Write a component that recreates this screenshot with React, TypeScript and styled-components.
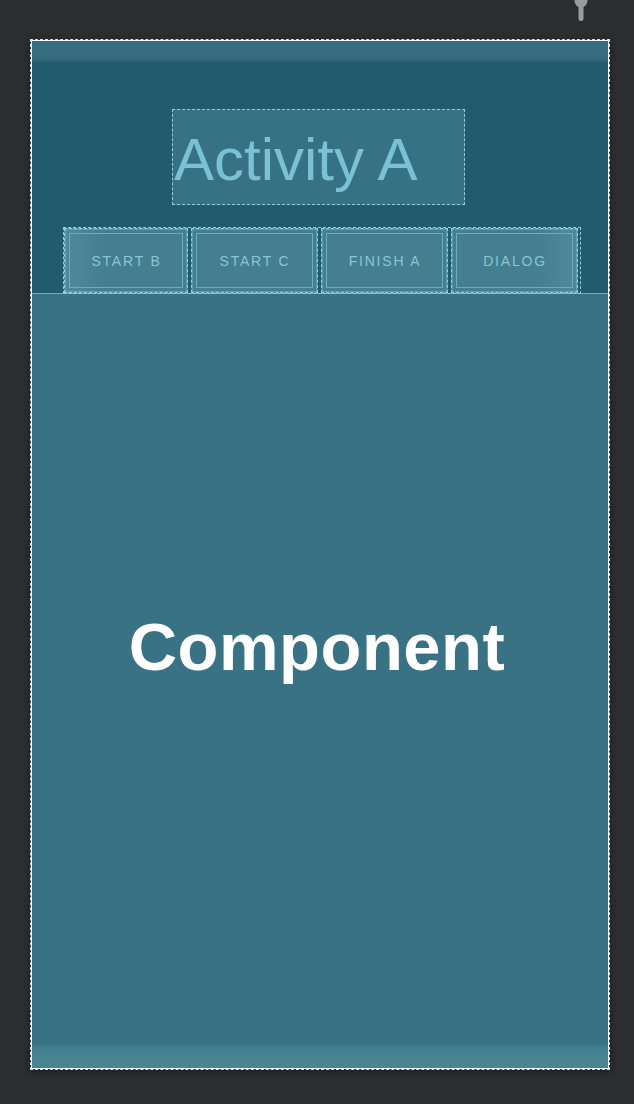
import React from "react";
import styled, { createGlobalStyle } from "styled-components";

const Global = createGlobalStyle`
  html, body { margin: 0; padding: 0; background: #2c2d2f; }
  body { width: 634px; height: 1104px; overflow: hidden; font-family: "Liberation Sans", Arial, sans-serif; }
`;

const Page = styled.div`
  position: relative;
  width: 634px;
  height: 1104px;
  padding: 39px 0 0 30px;
  box-sizing: border-box;
`;

const Pin = styled.svg`
  position: absolute;
  top: 0;
  left: 570px;
`;

const Device = styled.div`
  width: 580px;
  height: 1031px;
  box-sizing: border-box;
  border: 1px dashed #d5e2e6;
  box-shadow: inset 0 0 0 1px #f2fbfc, 0 2px 6px rgba(0,0,0,0.35);
  display: flex;
  flex-direction: column;
  overflow: hidden;
  padding: 1px;
`;

const Header = styled.div`
  flex: none;
  background: #225b6d;
  display: flex;
  flex-direction: column;
  align-items: center;
  border-bottom: 1px solid #66b1c3;
  height: 253px;
  box-sizing: border-box;
`;

const StatusBar = styled.div`
  flex: none;
  align-self: stretch;
  height: 21px;
  background: linear-gradient(#367080, #346c7c 85%, #2a6274);
`;

const TitleBox = styled.div`
  flex: none;
  margin: 47px 3px 0 0;
  width: 293px;
  height: 96px;
  box-sizing: border-box;
  border: 1px dashed #86d0e2;
  background: #377184;
  color: #79c1d3;
  font-family: "Liberation Sans", Arial, sans-serif;
  font-size: 60px;
  font-weight: 400;
  line-height: 100px;
  padding-left: 1px;
  white-space: nowrap;
`;

const ButtonRow = styled.div`
  flex: none;
  margin: 22px 0 0 3px;
  width: 518px;
  height: 67px;
  box-sizing: border-box;
  border: 1px dashed #86d0e2;
  display: flex;
  gap: 3px;
`;

const Btn = styled.div<{ $w: number; $edge?: "left" | "right" }>`
  width: ${(p) => p.$w}px;
  flex: none;
  box-sizing: border-box;
  border: 1px dashed #8ad4e6;
  box-shadow: inset 0 0 0 1px rgba(138, 212, 230, 0.35);
  background: ${(p) =>
    p.$edge === "left"
      ? "linear-gradient(90deg, #4e8898, #4e8898 8%, #447e8f 30%)"
      : p.$edge === "right"
      ? "linear-gradient(270deg, #4e8898, #4e8898 8%, #447e8f 30%)"
      : "#447e8f"};
  padding: 4px;
  display: flex;
`;

const BtnInner = styled.div`
  flex: 1;
  border: 1px solid #6aadbf;
  display: flex;
  align-items: center;
  justify-content: center;
  padding-left: 2px;
  color: #86c7d7;
  font-family: "Liberation Sans", Arial, sans-serif;
  font-size: 14px;
  font-weight: 400;
  letter-spacing: 1.8px;
`;

const Content = styled.div`
  flex: 1;
  background: #387284;
  display: flex;
  align-items: center;
  justify-content: center;
  padding-bottom: 46px;
`;

const Label = styled.div`
  margin-right: 6px;
  color: #ffffff;
  font-family: "Liberation Sans", Arial, sans-serif;
  font-weight: 700;
  font-size: 67px;
  letter-spacing: 0.5px;
`;

const NavBar = styled.div`
  flex: none;
  height: 23px;
  background: linear-gradient(#3f7c8c, #46838f 40%, #4a8692);
`;

const buttons: { label: string; w: number; edge?: "left" | "right" }[] = [
  { label: "START B", w: 124, edge: "left" },
  { label: "START C", w: 127 },
  { label: "FINISH A", w: 127 },
  { label: "DIALOG", w: 127, edge: "right" },
];

export default function App() {
  return (
    <Page>
      <Global />
      <Pin width="22" height="24" viewBox="0 0 22 24">
        <circle cx="11" cy="1" r="6.5" fill="#9b9b9d" />
        <rect x="8.5" y="4" width="5" height="17" rx="2.5" fill="#9b9b9d" />
      </Pin>
      <Device>
        <Header>
          <StatusBar />
          <TitleBox>Activity A</TitleBox>
          <ButtonRow>
            {buttons.map((b) => (
              <Btn key={b.label} $w={b.w} $edge={b.edge}>
                <BtnInner>{b.label}</BtnInner>
              </Btn>
            ))}
          </ButtonRow>
        </Header>
        <Content>
          <Label>Component</Label>
        </Content>
        <NavBar />
      </Device>
    </Page>
  );
}
